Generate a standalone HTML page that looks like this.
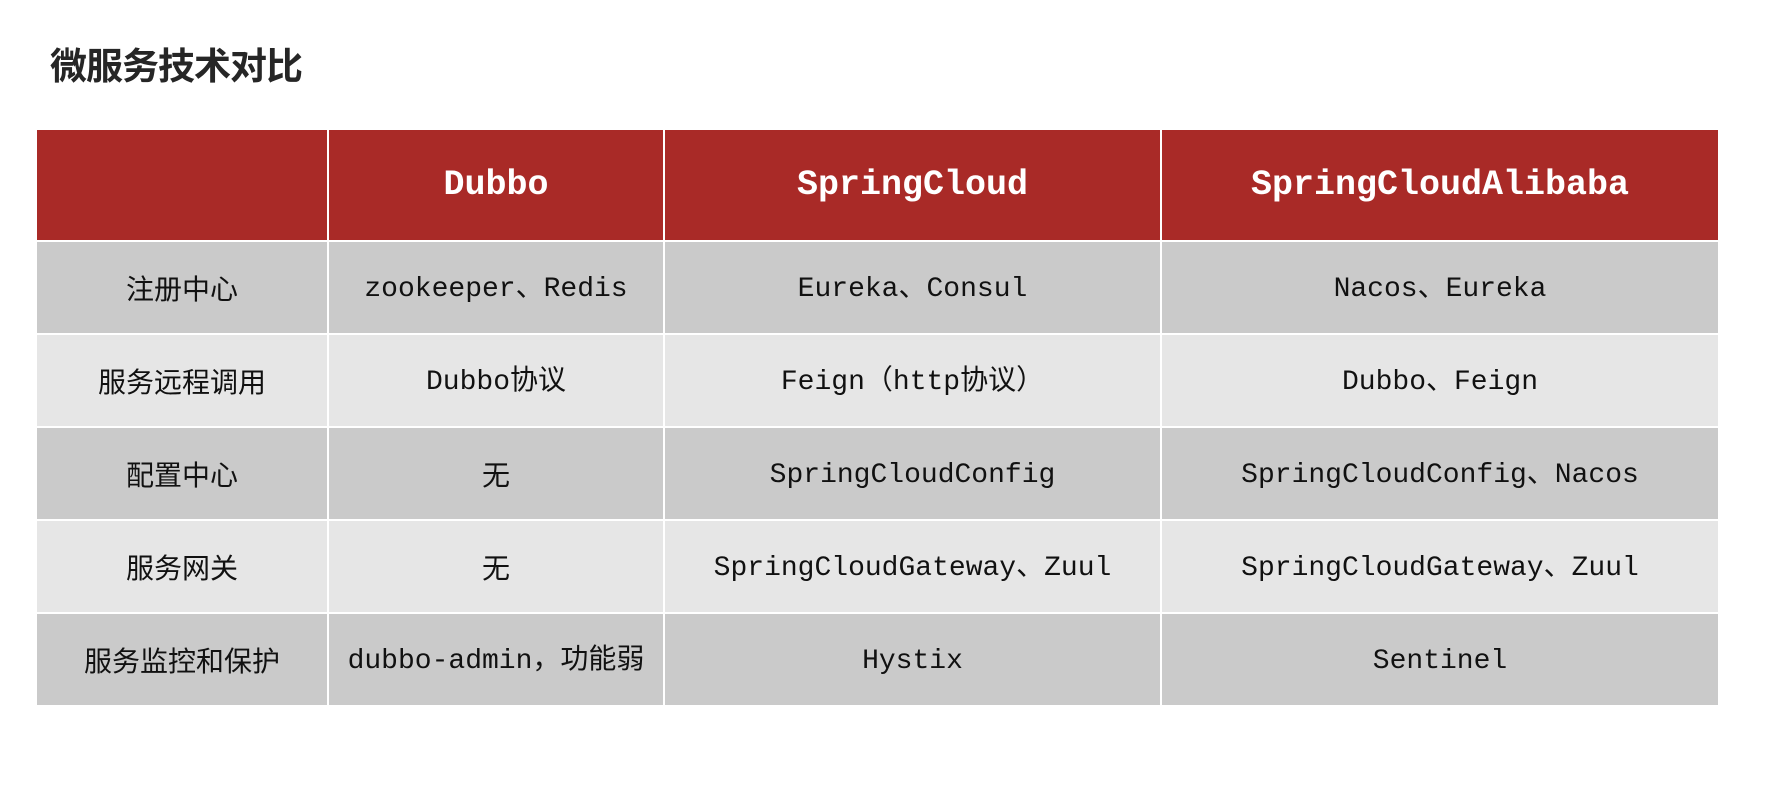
<!DOCTYPE html>
<html><head><meta charset="utf-8"><style>
html,body{margin:0;padding:0;background:#fff;width:1787px;height:785px;overflow:hidden}
h1{position:absolute;left:50px;top:36px;margin:0;font:bold 37px "Liberation Sans","Noto Sans CJK SC",sans-serif;color:#262626;letter-spacing:-1px}
table{position:absolute;left:35px;top:128px;border-collapse:collapse;table-layout:fixed;width:1690px}
td,th{border:2px solid #fff;padding:0;text-align:center;vertical-align:middle;font:28px/34px "Liberation Mono","Noto Sans CJK SC",monospace;color:#111}
td div,th div{display:flex;align-items:center;justify-content:center;white-space:nowrap}
th{background:#A92A27;color:#fff;font-weight:bold;font-size:35px}
th div{height:110px}
tr.a td{background:#CACACA}
tr.b td{background:#E6E6E6}
td div{height:91px;padding-top:4px;box-sizing:border-box}
td.c div{padding-top:0}
td.c{font-family:"Noto Sans CJK SC",sans-serif}
</style></head><body>
<h1>微服务技术对比</h1>
<table style="width:1683px">
<colgroup><col style="width:292px"><col style="width:336px"><col style="width:497px"><col style="width:558px"></colgroup>
<tr><th><div></div></th><th><div>Dubbo</div></th><th><div>SpringCloud</div></th><th><div>SpringCloudAlibaba</div></th></tr>
<tr class="a"><td class="c"><div>注册中心</div></td><td><div>zookeeper、Redis</div></td><td><div>Eureka、Consul</div></td><td><div>Nacos、Eureka</div></td></tr>
<tr class="b"><td class="c"><div>服务远程调用</div></td><td><div>Dubbo协议</div></td><td><div>Feign（http协议）</div></td><td><div>Dubbo、Feign</div></td></tr>
<tr class="a"><td class="c"><div>配置中心</div></td><td class="c"><div>无</div></td><td><div>SpringCloudConfig</div></td><td><div>SpringCloudConfig、Nacos</div></td></tr>
<tr class="b"><td class="c"><div>服务网关</div></td><td class="c"><div>无</div></td><td><div>SpringCloudGateway、Zuul</div></td><td><div>SpringCloudGateway、Zuul</div></td></tr>
<tr class="a"><td class="c"><div>服务监控和保护</div></td><td><div>dubbo-admin，功能弱</div></td><td><div>Hystix</div></td><td><div>Sentinel</div></td></tr>
</table>
</body></html>
